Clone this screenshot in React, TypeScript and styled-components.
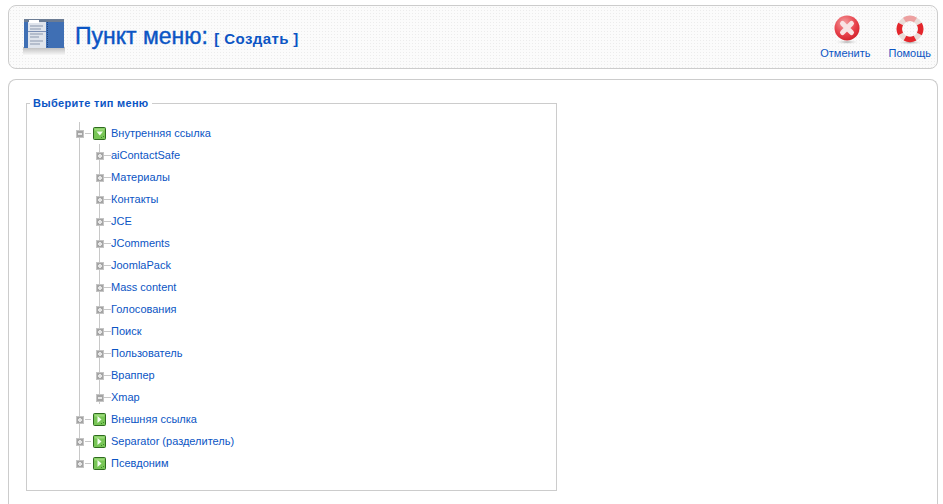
import styled, { createGlobalStyle } from 'styled-components';

const GlobalStyle = createGlobalStyle`
  html, body {
    margin: 0;
    background: #fff;
    font-family: "Liberation Sans", Arial, sans-serif;
    font-size: 11px;
    color: #0b55c4;
    overflow: hidden;
  }
`;

const children = [
  'aiContactSafe',
  'Материалы',
  'Контакты',
  'JCE',
  'JComments',
  'JoomlaPack',
  'Mass content',
  'Голосования',
  'Поиск',
  'Пользователь',
  'Враппер',
  'Xmap',
];

const Expander = ({ minus }: { minus?: boolean }) => (
  <ExpanderBox>
    <svg width='8' height='8' viewBox='0 0 8 8'>
      <rect x='0' y='0' width='8' height='8' fill='#a4a4a4' />
      <rect x='0.5' y='0.5' width='7' height='7' fill='none' stroke='#c4c4c4' />
      <rect x='2' y='3' width='4' height='2' fill='#e6e6e6' />
      {!minus && <rect x='3' y='2' width='2' height='4' fill='#e6e6e6' />}
    </svg>
  </ExpanderBox>
);

const FolderIcon = ({ open }: { open?: boolean }) => (
  <svg width='13' height='13' viewBox='0 0 13 13'>
    <rect x='0.5' y='0.5' width='12' height='12' rx='1' fill='#78c656' stroke='#2f6b1f' />
    <rect x='1.5' y='1.5' width='10' height='2' fill='#9bd97a' />
    {open ? (
      <path d='M3.5 4.5h6.5l-3.2 4z' fill='#f4fff0' />
    ) : (
      <path d='M4.5 3v7l4-3.5z' fill='#f4fff0' />
    )}
    <path d='M8 10.5h1M10 9.5h1' stroke='#3d8a28' />
  </svg>
);

const CancelIcon = () => (
  <svg width='26' height='32' viewBox='0 0 26 32'>
    <defs>
      <radialGradient id='cancelFill' cx='0.4' cy='0.3' r='0.85'>
        <stop offset='0' stopColor='#f4a0a0' />
        <stop offset='0.55' stopColor='#e7404a' />
        <stop offset='1' stopColor='#c8141c' />
      </radialGradient>
      <radialGradient id='iconShadow'>
        <stop offset='0' stopColor='#a8a8a8' />
        <stop offset='1' stopColor='#fff' stopOpacity='0' />
      </radialGradient>
    </defs>
    <ellipse cx='13' cy='28' rx='13' ry='2.5' fill='url(#iconShadow)' />
    <circle cx='13' cy='14' r='12.5' fill='url(#cancelFill)' />
    <path d='M8.5 9.5l9 9M17.5 9.5l-9 9' fill='none' stroke='#f8e4e4' strokeWidth='5' strokeLinecap='round' />
  </svg>
);

const HelpIcon = () => (
  <svg width='28' height='32' viewBox='0 0 28 32'>
    <defs>
      <radialGradient id='helpShadow'>
        <stop offset='0' stopColor='#a8a8a8' />
        <stop offset='1' stopColor='#fff' stopOpacity='0' />
      </radialGradient>
    </defs>
    <ellipse cx='14' cy='28.5' rx='14' ry='2.5' fill='url(#helpShadow)' />
    <circle cx='14' cy='15' r='10.5' fill='none' stroke='#e9dcd8' strokeWidth='5.5' />
    <path d='M8.5 6A10.5 10.5 0 0 1 19.5 6' fill='none' stroke='#eda0a0' strokeWidth='5.5' />
    <g fill='none' stroke='#e4262c' strokeWidth='5.5'>
      <path d='M4.6 10A10.5 10.5 0 0 0 4.6 20' />
      <path d='M23.4 10A10.5 10.5 0 0 1 23.4 20' />
      <path d='M9 24.2A10.5 10.5 0 0 0 19 24.2' />
    </g>
  </svg>
);

const MenuIcon = () => (
  <IconWrap>
    <svg width='42' height='38' viewBox='0 0 42 38'>
      <defs>
        <linearGradient id='logoShadow' x1='0' y1='0' x2='0' y2='1'>
          <stop offset='0' stopColor='#bbb' />
          <stop offset='1' stopColor='#fff' />
        </linearGradient>
      </defs>
      <rect x='0' y='28' width='42' height='9' fill='url(#logoShadow)' />
      <rect x='1' y='0' width='40' height='29' fill='#3f6fb4' />
      <rect x='1' y='0' width='40' height='3' fill='#6b7c94' />
      <rect x='5' y='3' width='18' height='26' fill='#dfe4ec' />
      <rect x='6' y='1' width='10' height='3' fill='#ffffff' />
      <path d='M7 7h13M7 10h11M7 15h13M7 18h9M7 22h13M7 25h10' stroke='#8a97ad' strokeWidth='1' />
      <rect x='5' y='12' width='18' height='1' fill='#7d90b4' />
      <path d='M24.5 3v26' stroke='#20457e' strokeWidth='1' strokeDasharray='1 1' />
    </svg>
  </IconWrap>
);

const App = () => (
  <Page>
    <GlobalStyle />
    <Header>
      <MenuIcon />
      <Title>
        Пункт меню: <small>[ Создать ]</small>
      </Title>
      <Toolbar>
        <ToolButton $iconShift={3}>
          <CancelIcon />
          <span>Отменить</span>
        </ToolButton>
        <ToolButton>
          <HelpIcon />
          <span>Помощь</span>
        </ToolButton>
      </Toolbar>
    </Header>
    <Content>
      <TreeFieldset>
        <legend>Выберите тип меню</legend>
        <Tree>
          <RootRow>
            <Expander minus />
            <Dash />
            <FolderIcon open />
            <Label>Внутренняя ссылка</Label>
          </RootRow>
          {children.map((name, i) => (
            <ChildRow key={name} $last={i === children.length - 1}>
              <Expander minus={name === 'Xmap'} />
              <ChildDash />
              <ChildLabel>{name}</ChildLabel>
            </ChildRow>
          ))}
          <RootRow>
            <Expander />
            <Dash />
            <FolderIcon />
            <Label>Внешняя ссылка</Label>
          </RootRow>
          <RootRow>
            <Expander />
            <Dash />
            <FolderIcon />
            <Label>Separator (разделитель)</Label>
          </RootRow>
          <RootRow $last>
            <Expander />
            <Dash />
            <FolderIcon />
            <Label>Псевдоним</Label>
          </RootRow>
        </Tree>
      </TreeFieldset>
    </Content>
  </Page>
);

const Page = styled.div`
  width: 943px;
  height: 504px;
  overflow: hidden;
  box-sizing: border-box;
  padding: 5px 5px 0 8px;
  display: flex;
  flex-direction: column;
  gap: 10px;
`;

const Header = styled.div`
  height: 64px;
  box-sizing: border-box;
  flex: none;
  display: flex;
  align-items: center;
  padding-left: 14px;
  border: 1px solid #cccccc;
  border-radius: 8px;
  background-color: #fbfbfb;
  background-image: radial-gradient(#ececec 0.6px, transparent 0.7px);
  background-size: 3px 3px;
`;

const IconWrap = styled.div`
  width: 42px;
  height: 38px;
  margin-top: 1px;
  flex: none;
`;

const Title = styled.h1`
  margin: -2px 0 0 10px;
  font-size: 23px;
  font-weight: normal;
  -webkit-text-stroke: 0.4px #0b55c4;
  color: #0b55c4;
  white-space: nowrap;
  small {
    font-size: 15px;
    font-weight: bold;
    letter-spacing: 0.4px;
    -webkit-text-stroke: 0;
  }
`;

const Toolbar = styled.div`
  margin-left: auto;
  display: flex;
  gap: 18px;
  padding-right: 6px;
  align-items: flex-end;
`;

const ToolButton = styled.div<{ $iconShift?: number }>`
  display: flex;
  flex-direction: column;
  align-items: center;
  gap: 1px;
  svg {
    margin-left: ${p => p.$iconShift ?? 0}px;
  }
  span {
    font-size: 11px;
    line-height: 13px;
  }
`;

const Content = styled.div`
  flex: 1;
  border: 1px solid #cccccc;
  border-radius: 8px 8px 0 0;
  border-bottom: 0;
  background: #fff;
  padding: 17px 0 0 17px;
`;

const TreeFieldset = styled.fieldset`
  width: 531px;
  height: 394px;
  box-sizing: border-box;
  margin: 0;
  padding: 12px 0 0 0;
  border: 1px solid #cccccc;
  legend {
    padding: 0 3px;
    margin-left: 3px;
    font-size: 11px;
    line-height: 13px;
    font-weight: bold;
    letter-spacing: 0.3px;
    color: #0b55c4;
  }
`;

const Tree = styled.div`
  display: flex;
  flex-direction: column;
  padding-left: 49px;
`;

const RootRow = styled.div<{ $last?: boolean }>`
  height: 22px;
  display: flex;
  align-items: center;
  position: relative;
  &::before {
    content: '';
    position: absolute;
    left: 3px;
    top: 0;
    bottom: ${p => (p.$last ? '11px' : '0')};
    width: 1px;
    background: #c8c8c8;
  }
`;

const ChildRow = styled.div<{ $last?: boolean }>`
  height: 22px;
  display: flex;
  align-items: center;
  padding-left: 20px;
  position: relative;
  &::before {
    content: '';
    position: absolute;
    left: 3px;
    top: 0;
    bottom: 0;
    width: 1px;
    background: #c8c8c8;
  }
  &::after {
    content: '';
    position: absolute;
    left: 23px;
    top: 0;
    bottom: ${p => (p.$last ? '4px' : '0')};
    width: 1px;
    background: #c8c8c8;
  }
`;

const ExpanderBox = styled.span`
  display: block;
  width: 8px;
  height: 8px;
  margin-top: 1px;
  position: relative;
  z-index: 1;
  svg {
    display: block;
  }
`;

const Dash = styled.span`
  width: 6px;
  height: 1px;
  margin: 0 2px 0 1px;
  background: #c8c8c8;
  flex: none;
`;

const ChildDash = styled.span`
  width: 7px;
  height: 1px;
  background: #c8c8c8;
  flex: none;
`;

const Label = styled.span`
  margin-left: 5px;
  white-space: nowrap;
`;

const ChildLabel = styled.span`
  white-space: nowrap;
`;

export default App;
